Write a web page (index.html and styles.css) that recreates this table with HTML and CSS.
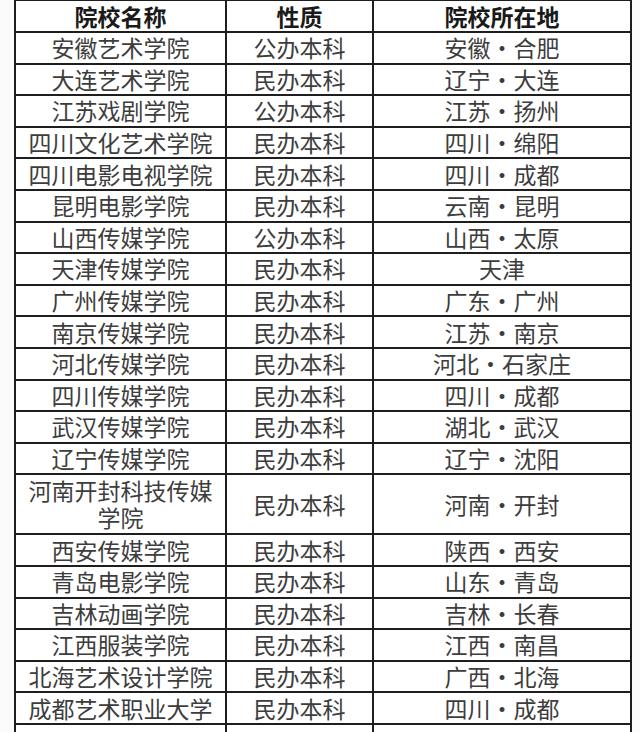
FILE: index.html
```html
<!DOCTYPE html>
<html lang="zh">
<head>
<meta charset="utf-8">
<link rel="stylesheet" href="styles.css">
</head>
<body>
<table class="schools">
  <colgroup>
    <col class="c-name">
    <col class="c-type">
    <col class="c-loc">
  </colgroup>
  <thead>
    <tr class="head"><th>院校名称</th><th>性质</th><th>院校所在地</th></tr>
  </thead>
  <tbody>
    <tr><td>安徽艺术学院</td><td>公办本科</td><td>安徽•合肥</td></tr>
    <tr><td>大连艺术学院</td><td>民办本科</td><td>辽宁•大连</td></tr>
    <tr><td>江苏戏剧学院</td><td>公办本科</td><td>江苏•扬州</td></tr>
    <tr><td>四川文化艺术学院</td><td>民办本科</td><td>四川•绵阳</td></tr>
    <tr><td>四川电影电视学院</td><td>民办本科</td><td>四川•成都</td></tr>
    <tr><td>昆明电影学院</td><td>民办本科</td><td>云南•昆明</td></tr>
    <tr><td>山西传媒学院</td><td>公办本科</td><td>山西•太原</td></tr>
    <tr><td>天津传媒学院</td><td>民办本科</td><td>天津</td></tr>
    <tr><td>广州传媒学院</td><td>民办本科</td><td>广东•广州</td></tr>
    <tr><td>南京传媒学院</td><td>民办本科</td><td>江苏•南京</td></tr>
    <tr><td>河北传媒学院</td><td>民办本科</td><td>河北•石家庄</td></tr>
    <tr><td>四川传媒学院</td><td>民办本科</td><td>四川•成都</td></tr>
    <tr><td>武汉传媒学院</td><td>民办本科</td><td>湖北•武汉</td></tr>
    <tr><td>辽宁传媒学院</td><td>民办本科</td><td>辽宁•沈阳</td></tr>
    <tr class="tall"><td>河南开封科技传媒<br>学院</td><td>民办本科</td><td>河南•开封</td></tr>
    <tr><td>西安传媒学院</td><td>民办本科</td><td>陕西•西安</td></tr>
    <tr><td>青岛电影学院</td><td>民办本科</td><td>山东•青岛</td></tr>
    <tr><td>吉林动画学院</td><td>民办本科</td><td>吉林•长春</td></tr>
    <tr><td>江西服装学院</td><td>民办本科</td><td>江西•南昌</td></tr>
    <tr><td>北海艺术设计学院</td><td>民办本科</td><td>广西•北海</td></tr>
    <tr><td>成都艺术职业大学</td><td>民办本科</td><td>四川•成都</td></tr>
    <tr class="more"><td></td><td></td><td></td></tr>
  </tbody>
</table>
</body>
</html>
```
FILE: styles.css
```css
html, body {
  margin: 0;
  padding: 0;
  background: #fbfbfb;
  overflow: hidden;
  height: 732px;
}
.schools {
  margin: -1px 0 0 14px;
  border-collapse: collapse;
  table-layout: fixed;
  width: 618px;
  background: #fff;
  font-family: "Noto Sans CJK SC", "Noto Sans", sans-serif;
  font-size: 23px;
  color: #3d3d3d;
}
.c-name { width: 211px; }
.c-type { width: 147px; }
.c-loc { width: 258px; }
.schools th, .schools td {
  border: 2px solid #1e1e1e;
  padding: 0;
  text-align: center;
  vertical-align: middle;
  line-height: 25px;
  white-space: nowrap;
}
.schools th {
  height: 30px;
  font-weight: 700;
  color: #1a1a1a;
}
.schools td {
  height: 29.6px;
}
.schools .tall td {
  height: 58px;
  line-height: 27px;
}
.schools .more td {
  height: 40px;
}
```
